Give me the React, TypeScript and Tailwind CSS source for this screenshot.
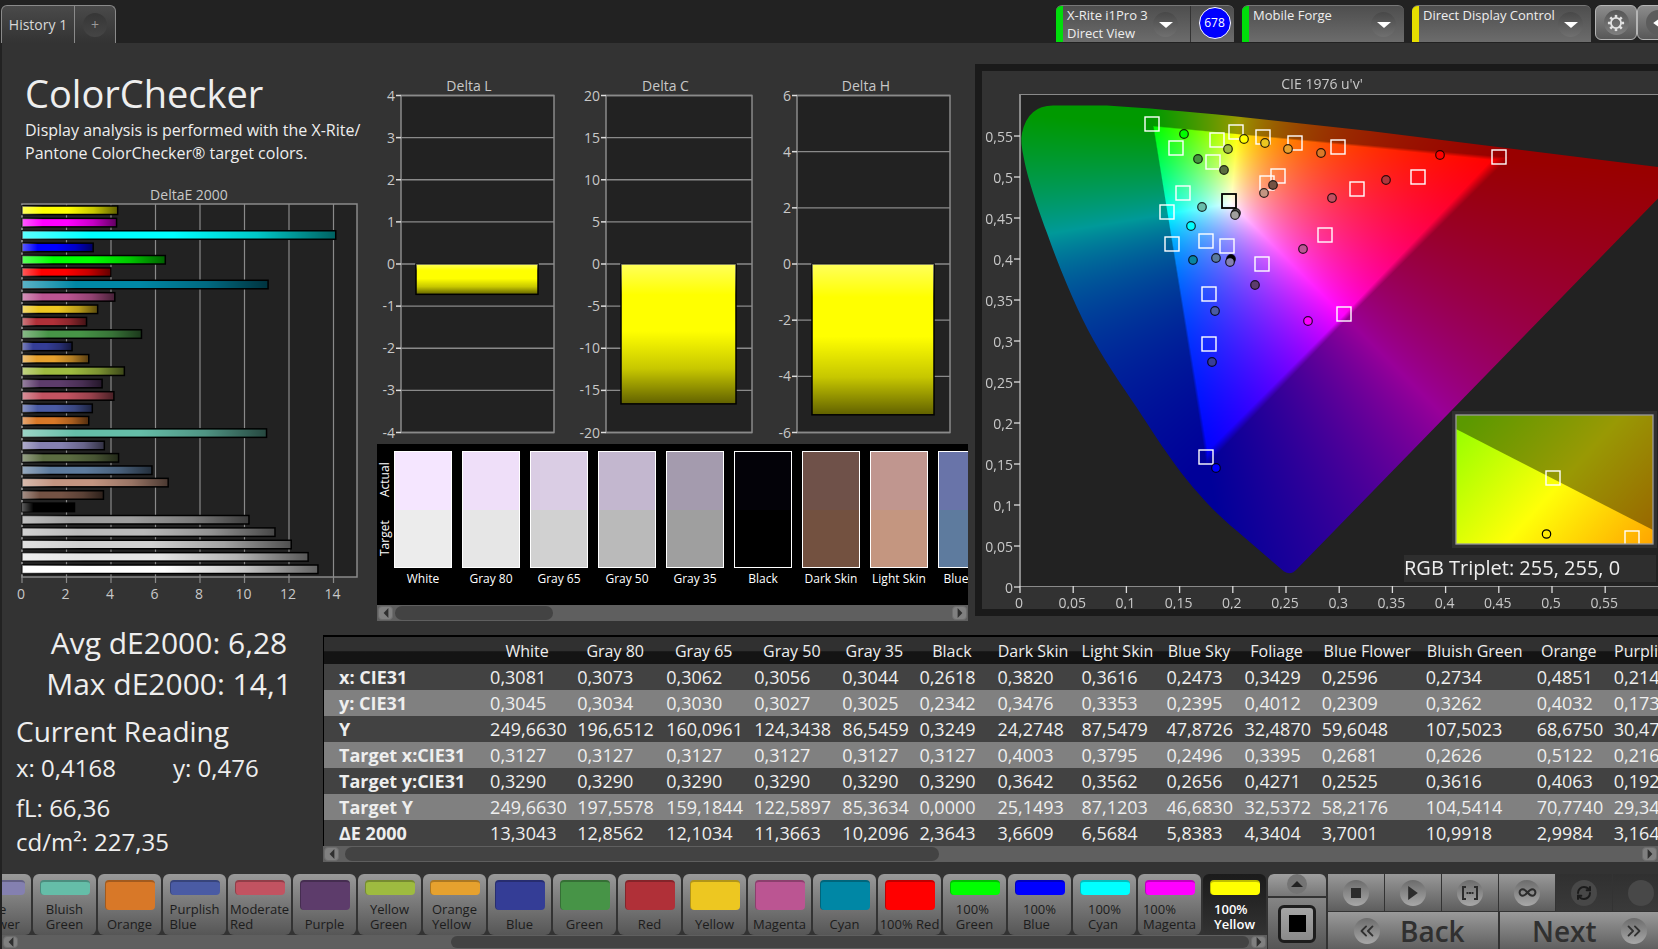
import React, { useEffect, useRef } from "react";
import { ChevronsLeft, ChevronsRight, Infinity as InfinityIcon, RefreshCw } from "lucide-react";
import clsx from "clsx";

type Patch = { name: string; color: string; de: number };

const PATCHES: Patch[] = [
    { name: "White", color: "#ffffff", de: 13.3 },
    { name: "Gray 80", color: "#e6e6e6", de: 12.86 },
    { name: "Gray 65", color: "#d0d0d0", de: 12.1 },
    { name: "Gray 50", color: "#bababa", de: 11.37 },
    { name: "Gray 35", color: "#9e9e9e", de: 10.2 },
    { name: "Black", color: "#000000", de: 2.36 },
    { name: "Dark Skin", color: "#735244", de: 3.66 },
    { name: "Light Skin", color: "#c39581", de: 6.57 },
    { name: "Blue Sky", color: "#5d7b9d", de: 5.84 },
    { name: "Foliage", color: "#5b6c41", de: 4.34 },
    { name: "Blue Flower", color: "#8480b0", de: 3.7 },
    { name: "Bluish Green", color: "#65bda8", de: 10.99 },
    { name: "Orange", color: "#d87828", de: 3.0 },
    { name: "Purplish Blue", color: "#4a5ba4", de: 3.16 },
    { name: "Moderate Red", color: "#c25361", de: 4.13 },
    { name: "Purple", color: "#5d3c6b", de: 3.6 },
    { name: "Yellow Green", color: "#9ebb40", de: 4.6 },
    { name: "Orange Yellow", color: "#e6a12e", de: 3.0 },
    { name: "Blue", color: "#343d96", de: 2.25 },
    { name: "Green", color: "#479447", de: 5.37 },
    { name: "Red", color: "#b03038", de: 2.9 },
    { name: "Yellow", color: "#edc721", de: 3.4 },
    { name: "Magenta", color: "#bb5592", de: 4.17 },
    { name: "Cyan", color: "#0087a5", de: 11.06 },
    { name: "100% Red", color: "#ff0000", de: 4.0 },
    { name: "100% Green", color: "#00ff00", de: 6.44 },
    { name: "100% Blue", color: "#0000ff", de: 3.2 },
    { name: "100% Cyan", color: "#00ffff", de: 14.1 },
    { name: "100% Magenta", color: "#ff00ff", de: 4.25 },
    { name: "100% Yellow", color: "#ffff00", de: 4.3 },
];

const SWATCHES = [
    { name: "White", actual: "#f5e6ff", target: "#ececec" },
    { name: "Gray 80", actual: "#efdff9", target: "#e6e6e6" },
    { name: "Gray 65", actual: "#dacde4", target: "#d1d1d1" },
    { name: "Gray 50", actual: "#c3b7cf", target: "#bababa" },
    { name: "Gray 35", actual: "#a49bae", target: "#9f9f9f" },
    { name: "Black", actual: "#030208", target: "#000000" },
    { name: "Dark Skin", actual: "#6f5149", target: "#735140" },
    { name: "Light Skin", actual: "#c0968f", target: "#c49680" },
    { name: "Blue Sky", actual: "#6974a9", target: "#5e7b9e" },
];

const COLUMNS = [
    { name: "White", width: "w-[87px]" },
    { name: "Gray 80", width: "w-[89px]" },
    { name: "Gray 65", width: "w-[88px]" },
    { name: "Gray 50", width: "w-[88px]" },
    { name: "Gray 35", width: "w-[77px]" },
    { name: "Black", width: "w-[78px]" },
    { name: "Dark Skin", width: "w-[84px]" },
    { name: "Light Skin", width: "w-[85px]" },
    { name: "Blue Sky", width: "w-[78px]" },
    { name: "Foliage", width: "w-[77px]" },
    { name: "Blue Flower", width: "w-[104px]" },
    { name: "Bluish Green", width: "w-[111px]" },
    { name: "Orange", width: "w-[77px]" },
    { name: "Purplish Blue", width: "w-[112px]" },
];

const ROWS: [string, string[]][] = [
    ["x: CIE31", ["0,3081", "0,3073", "0,3062", "0,3056", "0,3044", "0,2618", "0,3820", "0,3616", "0,2473", "0,3429", "0,2596", "0,2734", "0,4851", "0,2144"]],
    ["y: CIE31", ["0,3045", "0,3034", "0,3030", "0,3027", "0,3025", "0,2342", "0,3476", "0,3353", "0,2395", "0,4012", "0,2309", "0,3262", "0,4032", "0,1733"]],
    ["Y", ["249,6630", "196,6512", "160,0961", "124,3438", "86,5459", "0,3249", "24,2748", "87,5479", "47,8726", "32,4870", "59,6048", "107,5023", "68,6750", "30,4700"]],
    ["Target x:CIE31", ["0,3127", "0,3127", "0,3127", "0,3127", "0,3127", "0,3127", "0,4003", "0,3795", "0,2496", "0,3395", "0,2681", "0,2626", "0,5122", "0,2164"]],
    ["Target y:CIE31", ["0,3290", "0,3290", "0,3290", "0,3290", "0,3290", "0,3290", "0,3642", "0,3562", "0,2656", "0,4271", "0,2525", "0,3616", "0,4063", "0,1922"]],
    ["Target Y", ["249,6630", "197,5578", "159,1844", "122,5897", "85,3634", "0,0000", "25,1493", "87,1203", "46,6830", "32,5372", "58,2176", "104,5414", "70,7740", "29,3400"]],
    ["ΔE 2000", ["13,3043", "12,8562", "12,1034", "11,3663", "10,2096", "2,3643", "3,6609", "6,5684", "5,8383", "4,3404", "3,7001", "10,9918", "2,9984", "3,1640"]],
];

function ShadeDefs({ id, vertical = false }: { id: string; vertical?: boolean }) {
    return (
        <defs>
            <linearGradient id={id} x1="0" y1="0" x2={vertical ? 0 : 1} y2={vertical ? 1 : 0}>
                <stop offset="0" stopColor="#fff" stopOpacity="0.36" />
                <stop offset="0.22" stopColor="#fff" stopOpacity="0" />
                <stop offset="0.48" stopColor="#000" stopOpacity="0" />
                <stop offset="0.75" stopColor="#000" stopOpacity="0.22" />
                <stop offset="1" stopColor="#000" stopOpacity="0.62" />
            </linearGradient>
        </defs>
    );
}

function DeltaEChart() {
    const scale = 22.25;
    const bars = [...PATCHES].reverse();
    return (
        <svg width="375" height="425" viewBox="0 0 375 425" className="block text-sm" fill="#c8c8c8">
            <ShadeDefs id="shade-x" />
            <text x="189" y="16" textAnchor="middle">DeltaE 2000</text>
            <rect x="22" y="20" width="335" height="373" fill="#222" stroke="#8a8a8a" strokeWidth="1.5" />
            {[0, 2, 4, 6, 8, 10, 12, 14].map((n) => (
                <g key={n}>
                    <line x1={22 + n * scale} x2={22 + n * scale} y1="20" y2="399" stroke="#8a8a8a" strokeWidth="1.2" />
                    <text x={21 + n * scale} y="415" textAnchor="middle">{n}</text>
                </g>
            ))}
            {bars.map((b, i) => {
                const rect = { x: 22, y: 22 + i * 12.38, width: b.de * scale, height: 8.5 };
                return (
                    <g key={b.name}>
                        <rect {...rect} fill={b.color} stroke="#000" strokeWidth="1.5" />
                        <rect {...rect} fill="url(#shade-x)" />
                    </g>
                );
            })}
        </svg>
    );
}

type DeltaProps = { id: string; title: string; width: number; left: number; plot: number; max: number; step: number; value: number };

function DeltaChart({ id, title, width, left, plot, max, step, value }: DeltaProps) {
    const top = 24.5;
    const height = 337;
    const toY = (v: number) => top + ((max - v) / (max * 2)) * height;
    const ticks: number[] = [];
    for (let v = max; v >= -max; v -= step) ticks.push(v);
    return (
        <svg width={width} height="373" viewBox={`0 0 ${width} 373`} className="block shrink-0 text-sm" fill="#c8c8c8">
            <ShadeDefs id={id} vertical />
            <text x={width / 2 - 3} y="20" textAnchor="middle">{title}</text>
            <rect x={left} y={top} width={plot} height={height} fill="#222" stroke="#8a8a8a" strokeWidth="1.5" />
            {ticks.map((v) => (
                <g key={v}>
                    <line x1={left - 5} x2={left} y1={toY(v)} y2={toY(v)} stroke="#ddd" strokeWidth="1.5" />
                    <line x1={left} x2={left + plot} y1={toY(v)} y2={toY(v)} stroke="#8a8a8a" strokeWidth="1.3" />
                    <text x={left - 6} y={toY(v) + 5} textAnchor="end">{v}</text>
                </g>
            ))}
            <rect x={left + 15} y={toY(0)} width={plot - 31} height={toY(value) - toY(0)} fill="#ff0" stroke="#000" strokeWidth="1.5" />
            <rect x={left + 15} y={toY(0)} width={plot - 31} height={toY(value) - toY(0)} fill={`url(#${id})`} />
        </svg>
    );
}

// Plot geometry of the u'v' diagram, origin at the panel's inner corner
const U0 = 38;
const V0 = 516;
const U_SCALE = 1064;
const V_SCALE = 820;
const LOCUS =
    "M71 34.5 L125 34.5 Q180 38 250 45 L388 60 L676 96 L900 122 L676 127.6 L315 498 Q309 505 302 500.5 L255 460 C238 446 222 430 205 409 C188 388 172 363 155 337 C138 312 120 286 106 259 C91 230 76 193 65 162 C54 132 45 105 42 88 Q38 70 40 62 Q46 34.5 71 34.5 Z";

const TARGETS = [
    [170, 53], [194, 77], [235, 69], [231, 91], [254, 61], [281, 66], [313, 72], [356, 76],
    [285, 112], [296, 105], [201, 122], [185, 141], [190, 173], [224, 170], [245, 175], [280, 193],
    [227, 223], [227, 273], [375, 118], [343, 164], [362, 243], [224, 386], [517, 86], [436, 106],
];

const READINGS: [number, number, string][] = [
    [202, 63, "#00ff00"], [216, 88, "#46963f"], [246, 78, "#9fbc40"], [242, 99, "#5a6c40"],
    [262, 68, "#ffff00"], [283, 72, "#ecc61f"], [306, 78, "#e7a12f"], [339, 82, "#d97929"],
    [291, 114, "#735244"], [282, 122, "#c39581"], [350, 127, "#c25062"], [220, 136, "#67bdaa"],
    [209, 155, "#00ffff"], [211, 189, "#0885a1"], [234, 187, "#5b7a9d"], [249, 188, "#000000"],
    [248, 191, "#8580b1"], [254, 142, "#555555"], [253, 144, "#a09f9d"], [321, 178, "#bb5695"],
    [273, 214, "#5e3c6c"], [233, 240, "#4a5ba2"], [326, 250, "#ff00ff"], [230, 291, "#383d96"],
    [234, 397, "#0000ff"], [458, 84, "#ff0000"], [404, 109, "#af363c"],
];

function uvToRgb(u: number, v: number) {
    const X = (9 * u) / (4 * v);
    const Z = (12 - 3 * u - 20 * v) / (4 * v);
    const lin = [3.2406 * X - 1.5372 - 0.4986 * Z, -0.9689 * X + 1.8758 + 0.0415 * Z, 0.0557 * X - 0.204 + 1.057 * Z];
    const max = Math.max(...lin);
    // colours outside the RGB triangle are dimmed, with a soft step at its edge
    const edge = Math.min(1, Math.max(0, (Math.min(...lin) / max) * 80 + 0.5));
    const level = 153 + 102 * edge;
    return lin.map((c) => (Math.max(0, c) / max) * level);
}

function GamutCanvas() {
    const ref = useRef<HTMLCanvasElement>(null);

    useEffect(() => {
        const canvas = ref.current;
        const ctx = canvas?.getContext("2d");
        if (!canvas || !ctx) return;
        const { width, height } = canvas;
        const buffer = document.createElement("canvas");
        buffer.width = width;
        buffer.height = height;
        const bctx = buffer.getContext("2d")!;
        const image = bctx.createImageData(width, height);
        for (let y = 0; y < height; y++) {
            for (let x = 0; x < width; x++) {
                const [r, g, b] = uvToRgb((x - U0) / U_SCALE, Math.max(0.005, (V0 - y) / V_SCALE));
                image.data.set([r, g, b, 255], (y * width + x) * 4);
            }
        }
        bctx.putImageData(image, 0, 0);
        ctx.clearRect(0, 0, width, height);
        ctx.save();
        ctx.clip(new Path2D(LOCUS));
        ctx.drawImage(buffer, 0, 0);
        ctx.restore();
    }, []);

    return <canvas ref={ref} width={900} height={516} className="absolute top-0 left-0 max-w-none" />;
}

function CieChart() {
    const steps = [0, 1, 2, 3, 4, 5, 6, 7, 8, 9, 10, 11];
    const label = (n: number) => String((n * 5) / 100).replace(".", ",");
    return (
        <div className="relative min-w-0 flex-1 overflow-hidden bg-[#323232]">
            <div className="mt-[23px] ml-[37px] h-[493px] border-y border-l-2 border-[#8a8a8a] bg-[#222]" />
            <GamutCanvas />
            <svg width="900" height="545" viewBox="0 0 900 545" className="absolute top-0 left-0 max-w-none text-sm" fill="#c8c8c8">
                <defs>
                    <linearGradient id="inset" gradientUnits="userSpaceOnUse" x1="475" y1="360" x2="640" y2="510">
                        <stop offset="0" stopColor="#98ff00" />
                        <stop offset="0.5" stopColor="#ffff08" />
                        <stop offset="1" stopColor="#ffa300" />
                    </linearGradient>
                    <clipPath id="inset-clip">
                        <rect x="474" y="344" width="197" height="129" />
                    </clipPath>
                </defs>
                <text x="340" y="18" textAnchor="middle">CIE 1976 u'v'</text>
                {steps.map((n) => (
                    <g key={n}>
                        <line x1={U0 + n * 53.2} x2={U0 + n * 53.2} y1="515" y2="522" stroke="#ddd" strokeWidth="1.3" />
                        <text x={U0 + n * 53.2 - 1} y="537" textAnchor="middle">{label(n)}</text>
                        <line x1="32" x2="38" y1={516 - n * 41} y2={516 - n * 41} stroke="#ddd" strokeWidth="1.3" />
                        <text x="31" y={522 - n * 41} textAnchor="end">{label(n)}</text>
                    </g>
                ))}
                {TARGETS.map(([x, y]) => (
                    <rect key={`${x}-${y}`} x={x - 7} y={y - 7} width="14" height="14" fill="none" stroke="#fff" strokeWidth="1.4" />
                ))}
                <rect x="240" y="123" width="14" height="14" fill="none" stroke="#000" strokeWidth="1.8" />
                {READINGS.map(([x, y, color]) => (
                    <circle key={`${x}-${y}`} cx={x} cy={y} r="4.3" fill={color} stroke="#000" strokeOpacity="0.8" strokeWidth="1.2" />
                ))}
                <rect x="470" y="340" width="205" height="137" fill="#303030" />
                <rect x="474" y="344" width="197" height="129" fill="url(#inset)" />
                <polygon points="474,344 671,344 671,459 474,358" fill="#000" fillOpacity="0.4" />
                <g clipPath="url(#inset-clip)" fill="none">
                    <rect x="564" y="400" width="14" height="14" stroke="#fff" strokeWidth="1.4" />
                    <rect x="643" y="460" width="14" height="14" stroke="#fff" strokeWidth="1.4" />
                    <circle cx="564.5" cy="463" r="4.2" stroke="#000" strokeWidth="1.2" />
                </g>
                <rect x="474" y="344" width="197" height="129" fill="none" stroke="#9a9a9a" strokeWidth="1.3" />
                <rect x="422" y="484" width="252" height="27" fill="#2e2e2e" />
                <text x="422" y="504" className="text-xl" fill="#eee">RGB Triplet: 255, 255, 0</text>
            </svg>
        </div>
    );
}

function Triangle({ dir, className }: { dir: "left" | "right" | "up" | "down"; className?: string }) {
    const points = { left: "8,0 8,10 2,5", right: "2,0 2,10 8,5", up: "0,8 10,8 5,2", down: "0,2 10,2 5,8" }[dir];
    return (
        <svg viewBox="0 0 10 10" preserveAspectRatio="none" className={className} fill="currentColor" aria-hidden="true">
            <polygon points={points} />
        </svg>
    );
}

function GearIcon() {
    return (
        <svg viewBox="0 0 20 20" className="h-[18px] w-[18px] text-[#e2e2e2]" fill="none" stroke="currentColor" aria-hidden="true">
            <circle cx="10" cy="10" r="5.6" strokeWidth="2" />
            {[0, 45, 90, 135, 180, 225, 270, 315].map((a) => (
                <path key={a} d="M10 4.2V1" strokeWidth="2.8" transform={`rotate(${a} 10 10)`} />
            ))}
        </svg>
    );
}

function ScrollBar({ thumb, className }: { thumb: string; className?: string }) {
    const button = "flex w-[15px] shrink-0 items-center justify-center rounded-sm border border-[#6e6e6e] bg-[#808080] text-[#2f2f2f]";
    return (
        <div className={clsx("flex bg-[#5f5f5f] p-px", className)}>
            <button type="button" aria-label="Scroll left" className={button}>
                <Triangle dir="left" className="h-2.5 w-2" />
            </button>
            <div className="flex min-w-0 flex-1 px-0.5">
                <div className={clsx("rounded-full bg-[#434343]", thumb)} />
            </div>
            <button type="button" aria-label="Scroll right" className={button}>
                <Triangle dir="right" className="h-2.5 w-2" />
            </button>
        </div>
    );
}

function DeviceTab({ lines, color, width, badge }: { lines: string[]; color: string; width: string; badge?: string }) {
    return (
        <div className={clsx("flex h-[37px] shrink-0 overflow-hidden rounded-t-md border-t border-[#777] bg-linear-to-b from-[#4e4e4e] to-[#6c6c6c]", width)}>
            <div className={clsx("w-[7px] shrink-0", color)} />
            <button type="button" className={clsx("flex min-w-0 flex-1 items-start justify-between pl-1 text-left", badge ? "pr-3" : "pr-2")}>
                <span className="text-[13px] leading-[18px] whitespace-nowrap text-[#eee]">
                    {lines.map((line) => (
                        <span key={line} className="block">{line}</span>
                    ))}
                </span>
                <span className="mt-1.5 -ml-2 flex h-[25px] w-[25px] shrink-0 items-center justify-center rounded-full bg-linear-to-b from-[#484848] to-[#707070] text-white">
                    <Triangle dir="down" className="h-2.5 w-3.5" />
                </span>
            </button>
            {badge && (
                <div className="flex w-[44px] items-start justify-center border-l border-[#333] pt-px pl-1">
                    <span className="flex h-8 w-8 items-center justify-center rounded-full border border-white bg-[#0000ff] text-xs text-white">{badge}</span>
                </div>
            )}
        </div>
    );
}

function Header() {
    const tool = "flex h-[35px] w-[42px] shrink-0 items-center justify-center rounded-md border border-[#b5b5b5] bg-linear-to-b from-[#8c8c8c] to-[#585858]";
    return (
        <header className="flex h-[43px] shrink-0 items-start justify-between bg-[#222] pt-[5px]">
            <div className="ml-px flex h-[38px] rounded-t-md border border-b-0 border-[#8a8a8a] bg-linear-to-b from-[#4a4a4a] to-[#333]">
                <button type="button" className="w-[73px] border-r border-[#8a8a8a] text-sm text-[#d8d8d8]">History 1</button>
                <button type="button" aria-label="Add history" className="flex w-10 items-center justify-center">
                    <span className="flex h-6 w-6 items-center justify-center rounded-full bg-linear-to-b from-[#363636] to-[#454545] text-sm text-[#999]">+</span>
                </button>
            </div>
            <div className="flex w-[602px] shrink-0 overflow-hidden">
                <DeviceTab lines={["X-Rite i1Pro 3", "Direct View"]} color="bg-[#00dd0b]" width="w-[178px]" badge="678" />
                <div className="w-2 shrink-0" />
                <DeviceTab lines={["Mobile Forge"]} color="bg-[#00dd0b]" width="w-[162px]" />
                <div className="w-2 shrink-0" />
                <DeviceTab lines={["Direct Display Control"]} color="bg-[#e6de00]" width="w-[179px]" />
                <div className="ml-1 flex">
                    <button type="button" aria-label="Settings" className={tool}>
                        <span className="flex h-[25px] w-[25px] items-center justify-center rounded-full bg-linear-to-b from-[#555] to-[#808080]">
                            <GearIcon />
                        </span>
                    </button>
                    <button type="button" aria-label="Collapse" className={tool}>
                        <span className="flex h-[25px] w-[25px] items-center justify-center rounded-full bg-[#5c5c5c] text-white">
                            <Triangle dir="left" className="h-3.5 w-4" />
                        </span>
                    </button>
                </div>
            </div>
        </header>
    );
}

function SwatchStrip() {
    return (
        <section className="mr-[7px] bg-black text-white">
            <div className="flex h-[161px] overflow-hidden pt-[7px]">
                <div className="flex h-[117px] w-[17px] shrink-0 rotate-180 justify-around text-xs leading-4 [writing-mode:vertical-rl]">
                    <span>Target</span>
                    <span>Actual</span>
                </div>
                <div className="flex gap-2.5">
                    {SWATCHES.map((s) => (
                        <figure key={s.name} className="w-[58px] shrink-0">
                            <div className="flex h-[117px] flex-col border border-white">
                                <div className="flex-1" style={{ backgroundColor: s.actual }} />
                                <div className="flex-1" style={{ backgroundColor: s.target }} />
                            </div>
                            <figcaption className="pt-[3px] text-center text-xs whitespace-nowrap">{s.name}</figcaption>
                        </figure>
                    ))}
                </div>
            </div>
            <ScrollBar thumb="w-[158px]" className="h-4" />
        </section>
    );
}

function Readings() {
    return (
        <section className="w-[321px] shrink-0 pl-3.5 text-[#eee]">
            <div className="mr-px text-center text-3xl leading-[41px]">
                <p>Avg dE2000: 6,28</p>
                <p>Max dE2000: 14,1</p>
            </div>
            <h2 className="mt-2 text-[28px] leading-[38px]">Current Reading</h2>
            <div className="flex text-2xl leading-9">
                <p className="w-[157px]">x: 0,4168</p>
                <p>y: 0,476</p>
            </div>
            <p className="mt-1 text-2xl leading-9">fL: 66,36</p>
            <p className="text-2xl leading-8">cd/m²: 227,35</p>
        </section>
    );
}

function DataTable() {
    return (
        <section className="min-w-0 flex-1 pt-[13px]">
            <div className="overflow-hidden border-t-2 border-l border-black">
                <table className="w-[1397px] table-fixed border-collapse text-[#eee]">
                    <thead>
                        <tr className="h-[27px] bg-linear-to-b from-[#303030] from-50% to-[#141414] to-55%">
                            <th className="w-[161px]" />
                            {COLUMNS.map((c) => (
                                <th key={c.name} scope="col" className={clsx("py-0 pr-[3px] pl-0 text-center text-base leading-6 font-normal whitespace-nowrap", c.width)}>{c.name}</th>
                            ))}
                        </tr>
                    </thead>
                    <tbody>
                        {ROWS.map(([name, values]) => (
                            <tr key={name} className="h-[26px] odd:bg-[#424242] even:bg-[#808080]">
                                <th scope="row" className="py-0 pr-0 pl-[15px] text-left text-lg leading-[26px] font-bold whitespace-nowrap">{name}</th>
                                {values.map((v, i) => (
                                    <td key={i} className="py-0 pr-0 pl-[5px] text-lg leading-[26px] whitespace-nowrap">{v}</td>
                                ))}
                            </tr>
                        ))}
                    </tbody>
                </table>
            </div>
            <ScrollBar thumb="ml-1 w-[594px]" className="h-4" />
        </section>
    );
}

function PatchButton({ patch, selected }: { patch: Patch; selected: boolean }) {
    const tall = !patch.name.includes(" ") || patch.name === "100% Red";
    const words = tall ? [patch.name] : patch.name.split(" ");
    return (
        <button
            type="button"
            className={clsx(
                "flex h-[61px] w-[63px] shrink-0 flex-col items-center justify-between rounded-md pt-1.5 pb-[3px] text-[13px] leading-[15px] whitespace-nowrap",
                selected ? "bg-linear-to-b from-[#1b1b1b] to-[#333] font-semibold text-white" : "bg-linear-to-b from-[#9a9a9a] to-[#565656] text-[#1c1c1c]"
            )}
        >
            <span
                className={clsx("w-[50px] shrink-0 rounded-sm border-t-2 border-l border-black/25", tall ? "h-[30px]" : "h-[15px]")}
                style={{ backgroundColor: patch.color }}
            />
            <span className="text-left">
                {words.map((w) => (
                    <span key={w} className="block">{w}</span>
                ))}
            </span>
        </button>
    );
}

function Footer() {
    const round = "flex h-[26px] w-[26px] items-center justify-center rounded-full bg-linear-to-b from-[#6c6c6c] to-[#a8a8a8]";
    const control = "flex h-[37px] w-[57px] shrink-0 items-center justify-center border-r border-[#333] bg-linear-to-b from-[#999] to-[#5e5e5e] text-[#2c2c2c]";
    const dark = "flex h-[37px] w-[57px] shrink-0 items-center justify-center border-r border-[#333] bg-linear-to-b from-[#303030] to-[#3a3a3a] text-[#1b1b1b]";
    const nav = "flex h-[37px] items-center bg-linear-to-b from-[#9a9a9a] to-[#606060] text-[28px] font-semibold text-[#303030]";
    return (
        <footer className="flex h-[75px] shrink-0 border-l-2 border-[#222] bg-[#333]">
            <div className="flex min-w-0 flex-1 flex-col">
                <div className="flex justify-end gap-0.5 overflow-hidden pr-px">
                    {PATCHES.slice(10).map((p) => (
                        <PatchButton key={p.name} patch={p} selected={p.name === "100% Yellow"} />
                    ))}
                </div>
                <ScrollBar thumb="ml-auto w-[798px]" className="h-3.5" />
            </div>
            <div className="flex w-[61px] shrink-0 flex-col gap-0.5 pr-0.5 pl-px">
                <button type="button" aria-label="Show more" className="flex h-[22px] justify-center rounded-t-md bg-linear-to-b from-[#a0a0a0] to-[#777] text-[#222]">
                    <span className="flex h-5 w-5 items-center justify-center rounded-full bg-[#747474]">
                        <Triangle dir="up" className="h-2.5 w-3" />
                    </span>
                </button>
                <div className="flex flex-1 items-center justify-center bg-linear-to-b from-[#858585] to-[#555]">
                    <button type="button" aria-label="Stop" className="flex h-[38px] w-[38px] items-center justify-center rounded-md border-[3px] border-[#1d1d1d] bg-linear-to-b from-[#a5a5a5] to-[#8a8a8a]">
                        <span className="h-[17px] w-[17px] bg-black" />
                    </button>
                </div>
            </div>
            <div className="flex w-[330px] shrink-0 flex-col gap-px overflow-hidden">
                <div className="flex">
                    <button type="button" aria-label="Stop reading" className={control}>
                        <span className={round}><span className="h-2.5 w-2.5 bg-[#2c2c2c]" /></span>
                    </button>
                    <button type="button" aria-label="Play" className={control}>
                        <span className={round}><Triangle dir="right" className="h-3.5 w-4" /></span>
                    </button>
                    <button type="button" aria-label="Read range" className={control}>
                        <span className={round}>
                            <svg viewBox="0 0 18 14" className="h-3.5 w-[18px]" fill="none" stroke="currentColor" strokeWidth="2">
                                <path d="M5 1H2v12h3M13 1h3v12h-3M5.5 7h2M8 7h2M10.5 7h2" />
                            </svg>
                        </span>
                    </button>
                    <button type="button" aria-label="Continuous" className={control}>
                        <span className={round}><InfinityIcon size={19} strokeWidth={2.5} /></span>
                    </button>
                    <button type="button" aria-label="Refresh" className={dark}>
                        <span className="flex h-[26px] w-[26px] items-center justify-center rounded-full bg-[#484848]"><RefreshCw size={16} strokeWidth={3} /></span>
                    </button>
                    <button type="button" aria-label="Record" className={dark}>
                        <span className="h-[26px] w-[26px] rounded-full bg-[#484848]" />
                    </button>
                </div>
                <div className="flex gap-0.5">
                    <button type="button" className={clsx(nav, "w-[170px] shrink-0 gap-5 pl-[26px]")}>
                        <span className={round}><ChevronsLeft size={22} /></span>
                        Back
                    </button>
                    <button type="button" className={clsx(nav, "flex-1 gap-6 pl-8")}>
                        Next
                        <span className={round}><ChevronsRight size={22} /></span>
                    </button>
                </div>
            </div>
        </footer>
    );
}

export default function App() {
    return (
        <div className="flex h-screen flex-col overflow-hidden bg-[#333] font-['Open_Sans',sans-serif]">
            <Header />
            <main className="flex min-h-0 flex-1 flex-col border-l-2 border-[#222]">
                <div className="flex h-[579px] shrink-0">
                    <section className="w-[375px] shrink-0">
                        <div className="pt-6 pl-[23px] text-[#eee]">
                            <h1 className="text-[38px] leading-[52px]">ColorChecker</h1>
                            <p className="text-base leading-[23px] whitespace-nowrap">
                                Display analysis is performed with the X-Rite/
                                <br />
                                Pantone ColorChecker® target colors.
                            </p>
                        </div>
                        <div className="mt-[19px] -ml-0.5">
                            <DeltaEChart />
                        </div>
                    </section>
                    <div className="w-[598px] shrink-0 pt-7">
                        <div className="flex">
                            <DeltaChart id="shade-l" title="Delta L" width={190} left={24} plot={153} max={4} step={1} value={-0.72} />
                            <DeltaChart id="shade-c" title="Delta C" width={203} left={39} plot={146} max={20} step={5} value={-16.6} />
                            <DeltaChart id="shade-h" title="Delta H" width={198} left={27} plot={153} max={6} step={2} value={-5.37} />
                        </div>
                        <SwatchStrip />
                    </div>
                    <div className="mt-[21px] flex h-[552px] min-w-0 flex-1 border-y-[7px] border-l-[7px] border-[#1a1a1a]">
                        <CieChart />
                    </div>
                </div>
                <div className="flex min-h-0 flex-1">
                    <Readings />
                    <DataTable />
                </div>
            </main>
            <Footer />
        </div>
    );
}
